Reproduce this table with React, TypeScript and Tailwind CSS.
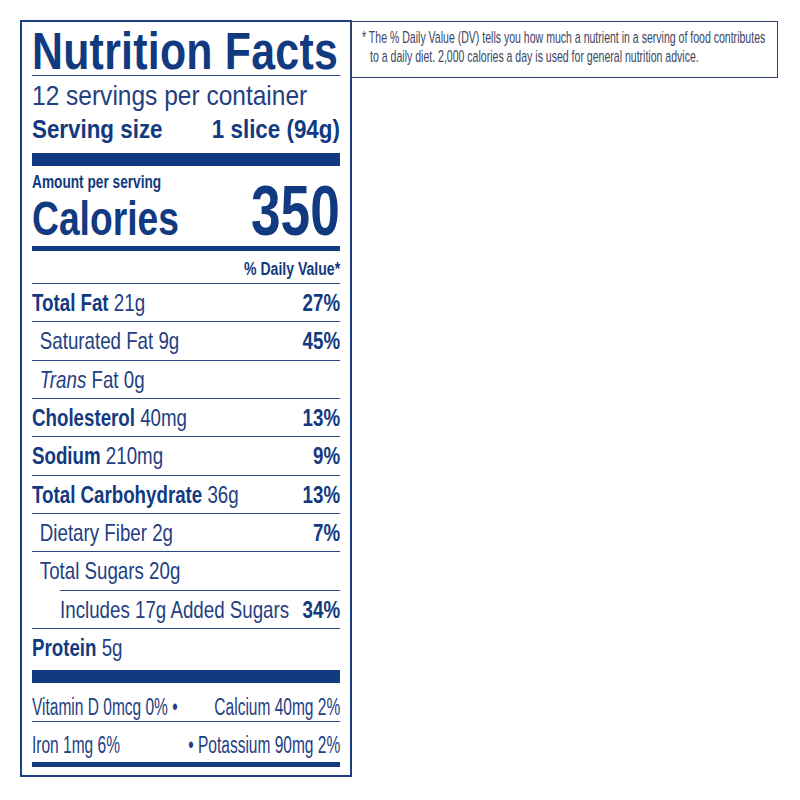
import React from 'react';

const font = { fontFamily: '"Liberation Sans", Arial, sans-serif' };

type Row = {
  label: string;
  amount?: string;
  dv?: string;
  bold?: boolean;
  indent?: 'sm' | 'lg';
  italic?: string;
};

const rows: Row[] = [
  { label: 'Total Fat', amount: '21g', dv: '27%', bold: true },
  { label: 'Saturated Fat', amount: '9g', dv: '45%', indent: 'sm' },
  { label: 'Fat', amount: '0g', indent: 'sm', italic: 'Trans' },
  { label: 'Cholesterol', amount: '40mg', dv: '13%', bold: true },
  { label: 'Sodium', amount: '210mg', dv: '9%', bold: true },
  { label: 'Total Carbohydrate', amount: '36g', dv: '13%', bold: true },
  { label: 'Dietary Fiber', amount: '2g', dv: '7%', indent: 'sm' },
  { label: 'Total Sugars', amount: '20g', indent: 'sm' },
  { label: 'Includes 17g Added Sugars', dv: '34%', indent: 'lg' },
];

// rows live in a block squeezed to 0.78 so Liberation Sans reads like a condensed face
const NutrientRow: React.FC<{ row: Row }> = ({ row }) => (
  <div
    className={`flex justify-between h-[38.33px] border-t border-[#2b4a8a] pt-[2px] text-[24px] leading-[34px] whitespace-nowrap ${
      row.indent === 'lg' ? 'ml-[36px]' : ''
    }`}
  >
    <span className={row.indent === 'sm' ? 'pl-[10px]' : ''}>
      {row.italic && <span className="italic">{row.italic} </span>}
      {row.bold ? <span className="font-bold text-[#123a80]">{row.label}</span> : row.label}
      {row.amount && ` ${row.amount}`}
    </span>
    {row.dv && <span className="font-bold text-[#123a80]">{row.dv}</span>}
  </div>
);

const App: React.FC = () => {
  return (
    <div className="w-[800px] h-[800px] bg-white flex items-start pt-[20px] pl-[20px]" style={font}>
      {/* Label */}
      <div className="w-[332px] border-2 border-[#1c3f84] px-[10px] pb-[8px] flex flex-col text-[#24407f]">
        <div className="w-[367px] origin-left scale-x-[0.84] pt-[7px] text-[51px] leading-[46px] font-bold text-[#123a80] border-b border-[#2b4a8a] tracking-[0.3px] whitespace-nowrap">
          Nutrition Facts
        </div>

        <div className="w-[358px] origin-left scale-x-[0.86] whitespace-nowrap">
          <div className="mt-[5px] text-[28.5px] leading-[28px]">12 servings per container</div>
          <div className="mt-[6px] flex justify-between text-[26px] leading-[28px] font-bold text-[#123a80]">
            <span>Serving size</span>
            <span>1 slice (94g)</span>
          </div>
        </div>
        <div className="mt-[10px] h-[13px] bg-[#123a80]" />

        <div className="w-[405px] origin-left scale-x-[0.76] flex justify-between items-end font-bold text-[#123a80] whitespace-nowrap">
          <div className="flex flex-col">
            <span className="mt-[6px] text-[18px] leading-[20px]">Amount per serving</span>
            <span className="mt-[4px] text-[49px] leading-[44px]">Calories</span>
          </div>
          <span className="text-[70px] leading-[58px]">350</span>
        </div>
        <div className="mt-[6px] h-[5px] bg-[#123a80]" />

        <div className="w-[395px] origin-left scale-x-[0.78]">
          <div className="h-[32px] pt-[8px] text-right text-[18px] leading-[20px] font-bold text-[#123a80]">
            % Daily Value*
          </div>
          {rows.map((r) => (
            <NutrientRow key={r.label} row={r} />
          ))}
          <div className="h-[42px] border-t border-[#2b4a8a] pt-[2px] text-[24px] leading-[34px]">
            <span className="font-bold text-[#123a80]">Protein</span> 5g
          </div>
        </div>
        <div className="h-[13px] bg-[#123a80]" />

        <div className="w-[467px] origin-left scale-x-[0.66] text-[23.5px] leading-[32px] whitespace-nowrap">
          <div className="flex justify-between h-[38px] pt-[8px]">
            <span>Vitamin D 0mcg 0% •</span>
            <span>Calcium 40mg 2%</span>
          </div>
          <div className="flex justify-between h-[41px] border-t border-[#2b4a8a] pt-[7px]">
            <span>Iron 1mg 6%</span>
            <span>• Potassium 90mg 2%</span>
          </div>
        </div>
        <div className="h-[5px] bg-[#123a80]" />
      </div>

      {/* Footnote */}
      <div className="w-[428px] h-[57px] ml-[-2px] mt-[1px] border border-[#34426f] pl-[11px] pt-[6px] overflow-hidden">
        <div className="w-[664px] origin-left scale-x-[0.62] text-[17px] leading-[19px] text-[#3d4560] whitespace-nowrap">
          <div>* The % Daily Value (DV) tells you how much a nutrient in a serving of food contributes</div>
          <div className="pl-[13px]">to a daily diet. 2,000 calories a day is used for general nutrition advice.</div>
        </div>
      </div>
    </div>
  );
};

export default App;
